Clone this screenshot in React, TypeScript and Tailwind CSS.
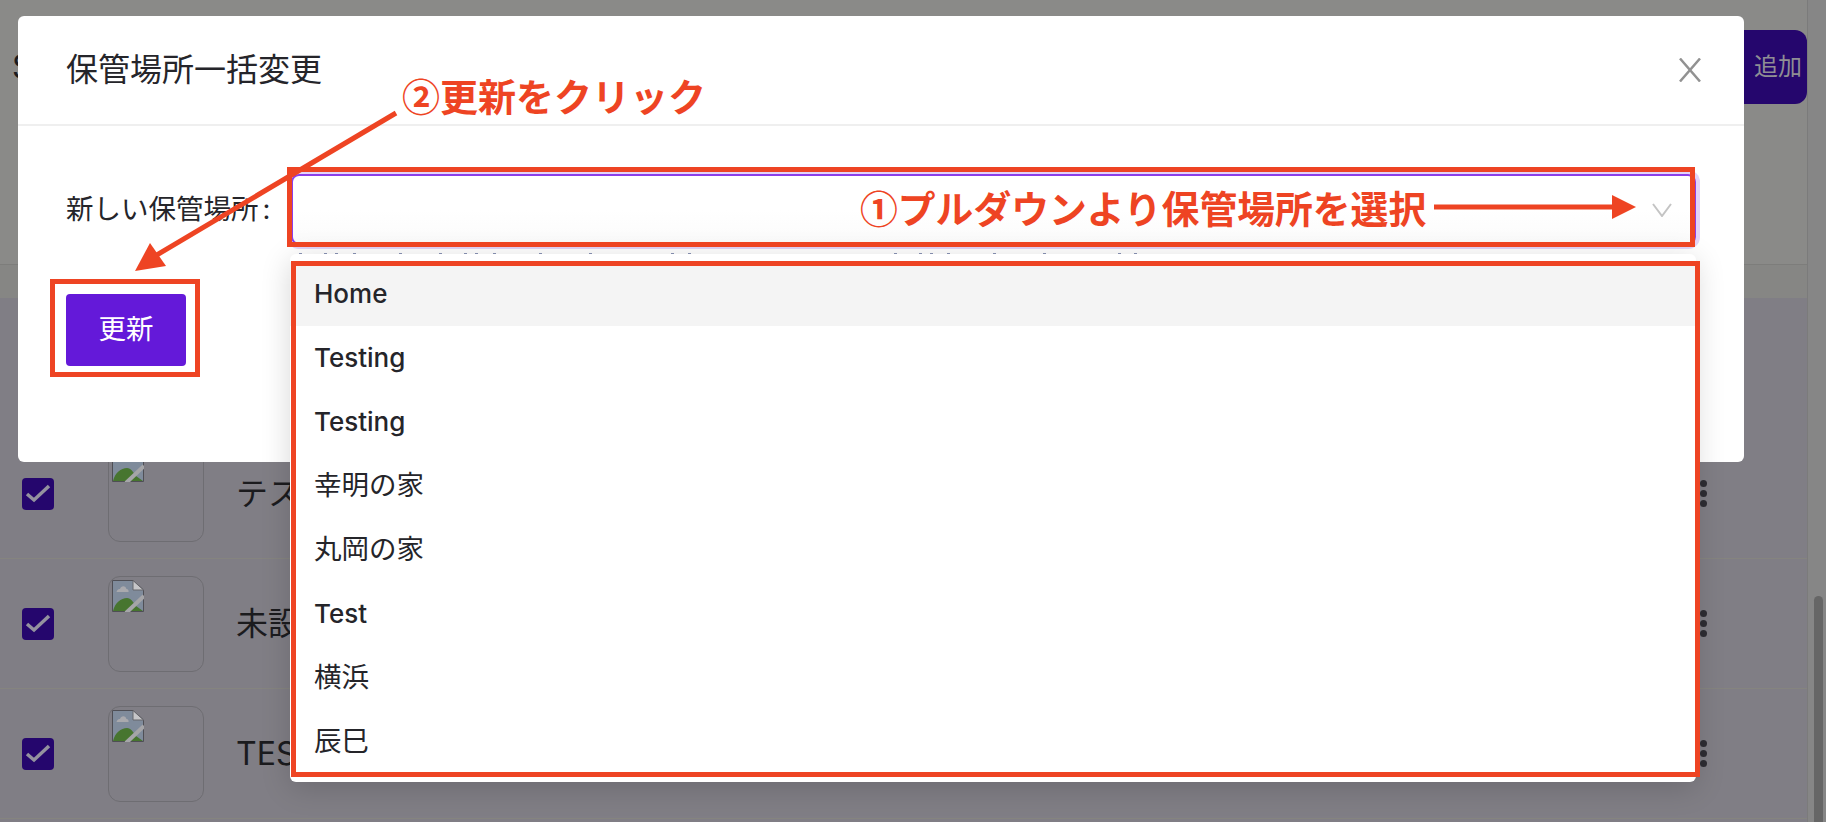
import React from 'react';

const locations = [
  { name: 'Home', latin: true },
  { name: 'Testing', latin: true },
  { name: 'Testing', latin: true },
  { name: '幸明の家', latin: false },
  { name: '丸岡の家', latin: false },
  { name: 'Test', latin: true },
  { name: '横浜', latin: false },
  { name: '辰巳', latin: false },
];

const items = ['テスト', '未設定', 'TEST'];

// Tops of the help text that peek out from under the dropdown
const peekMarks = [8, 33, 44, 62, 108, 148, 173, 184, 202, 248, 298, 380, 397, 603, 628, 639, 656, 702, 752, 827, 843];

// Browser's broken image placeholder
const BrokenImage = () => (
  <svg width="32" height="32" viewBox="0 0 32 32" className="absolute left-[2.5px] top-[3.5px]">
    <path d="M0.5 0.5H21L31.5 10V31.5H0.5Z" fill="#7f8b9b" stroke="#4f4f55" />
    <path d="M21 0.5V10H31.5Z" fill="#c6c6c8" stroke="#66666a" />
    <path d="M4.5 12C5 9.5 7 9 8 9C9 6 13 5 14.5 9C16 9 17 10.5 16.5 12Z" fill="#a9a9ad" />
    <path d="M1 31C3 23 9 18 15 18C19 18 21 22 24 26L31 31Z" fill="#47752f" />
    <path d="M14 33L32 16" stroke="#a5a5a8" strokeWidth="4" />
  </svg>
);

const ItemRow = ({ label }: { label: string }) => (
  <div className="flex h-[130px] shrink-0 items-center border-b border-[#85847f] pl-[22px] pr-[100px]">
    <div className="h-8 w-8 shrink-0 rounded-[4px] bg-[#25066d]">
      <svg width="32" height="32" viewBox="0 0 32 32" fill="none" stroke="#94929f" strokeWidth="3.5">
        <path d="M5 16L12 22L27 8" />
      </svg>
    </div>
    <div className="relative ml-[54px] h-[96px] w-[96px] shrink-0 rounded-xl border-[1.5px] border-[#6e6d72]">
      <BrokenImage />
    </div>
    <span className="ml-[32px] text-[32px] text-[#1b1b1e]">{label}</span>
    <div className="ml-auto flex flex-col gap-[3px]">
      <span className="h-[7px] w-[7px] rounded-full bg-[#2e2d33]" />
      <span className="h-[7px] w-[7px] rounded-full bg-[#2e2d33]" />
      <span className="h-[7px] w-[7px] rounded-full bg-[#2e2d33]" />
    </div>
  </div>
);

const Dropdown = () => (
  <div className="absolute left-[272px] top-[238px] z-10 w-[1406px] rounded-md bg-white py-2 shadow-[0_6px_30px_rgba(0,0,0,0.16)]">
    {locations.map((loc, i) => (
      <div
        key={i}
        className={`flex h-16 items-center pl-6 text-[#25252a] ${loc.latin ? 'pb-[2px] text-[26px] font-medium' : 'text-[27.5px] font-normal'} ${i === 0 ? 'bg-[#f4f4f4]' : ''}`}
      >
        {loc.name}
      </div>
    ))}
  </div>
);

const Annotations = () => (
  <>
    <svg width="1826" height="822" className="pointer-events-none absolute left-0 top-0 z-20">
      <path d="M396 113L150 259" stroke="#ee4423" strokeWidth="5" />
      <path d="M135 271L150 243L166 266Z" fill="#ee4423" />
      <path d="M1434 207H1614" stroke="#ee4423" strokeWidth="5" />
      <path d="M1612 195L1636 207L1612 219Z" fill="#ee4423" />
    </svg>
    <div className="absolute left-[287px] top-[167px] z-20 h-[80px] w-[1408px] border-[5px] border-[#ee4423]" />
    <div className="absolute left-[291px] top-[261px] z-20 h-[516px] w-[1409px] border-[5px] border-[#ee4423]" />
    <div className="absolute left-[50px] top-[279px] z-20 h-[98px] w-[150px] border-[5px] border-[#ee4423]" />
    <span className="absolute left-[402px] top-[72px] z-20 font-['Noto_Sans_CJK_JP',sans-serif] text-[38px] font-bold leading-[46px] text-[#ee4423]">
      ②更新をクリック
    </span>
    <span className="absolute left-[860px] top-[184px] z-20 whitespace-nowrap font-['Noto_Sans_CJK_JP',sans-serif] text-[37.8px] font-bold leading-[46px] text-[#ee4423]">
      ①プルダウンより保管場所を選択
    </span>
  </>
);

export default function App() {
  return (
    <div className="relative h-[822px] w-full overflow-hidden bg-[#807e85] font-['Inter','Noto_Sans_CJK_JP',sans-serif]">
      {/* Page behind the overlay */}
      <div className="flex h-full">
        <div className="flex min-w-0 flex-1 flex-col">
          <div className="flex h-[265px] shrink-0 items-start justify-between border-b border-[#7d7d7b] bg-[#8a8a88] pt-[30px]">
            <span className="ml-3 text-[32px] leading-[74px] text-[#1b1b1e]">S</span>
            <div className="flex h-[74px] w-[110px] items-center justify-end rounded-xl bg-[#25066d] pr-[5px] text-2xl text-[#8f8e94]">
              追加
            </div>
          </div>
          <div className="h-[33px] shrink-0 bg-[#868684]" />
          <div className="flex flex-col pt-[131px]">
            {items.map((label) => (
              <ItemRow key={label} label={label} />
            ))}
          </div>
        </div>
        <div className="flex w-[19px] shrink-0 flex-col border-l border-[#7b7b7b] bg-[#868686] pl-[6px] pr-[3px] pt-[596px]">
          <div className="flex-1 rounded-t-lg bg-[#666666]" />
        </div>
      </div>

      {/* Modal */}
      <div className="absolute left-[18px] top-4 h-[446px] w-[1726px] rounded-md bg-white">
        <div className="flex h-[110px] items-center justify-between border-b-2 border-[#efefef] pl-12 pr-[43px]">
          <h2 className="text-[32px] font-normal text-[#25252a]">保管場所一括変更</h2>
          <svg width="22" height="24" viewBox="0 0 22 24" fill="none" stroke="#929292" strokeWidth="2.5">
            <path d="M1 0.5L21 23.5M21 0.5L1 23.5" />
          </svg>
        </div>
        <div className="flex items-center pl-12 pt-[48px]">
          <label className="w-[225px] shrink-0 text-[27.5px] text-[#25252a]">
            新しい保管場所<span className="ml-1">:</span>
          </label>
          <div className="relative flex h-[71px] w-[1405px] items-center justify-end rounded-lg border-2 border-[#8c3ee8] bg-gradient-to-b from-white via-white to-[#fbfbfb] pr-[22px] shadow-[0_0_0_4px_#e3d4f9]">
            <svg width="20" height="14" viewBox="0 0 20 14" fill="none" stroke="#c4c4c4" strokeWidth="2">
              <path d="M1 1L10 13L19 1" />
            </svg>
            <svg width="860" height="2" className="absolute left-[-2px] top-[77px]">
              {peekMarks.map((x) => (
                <rect key={x} x={x} y="0" width="3" height="1.5" fill="#8a93b5" />
              ))}
            </svg>
          </div>
        </div>
        <button className="ml-12 mt-[49px] flex h-[72px] w-[120px] items-center justify-center rounded-[4px] bg-[#6419d9] text-[27.5px] text-white">
          更新
        </button>
        <Dropdown />
      </div>

      <Annotations />
    </div>
  );
}
